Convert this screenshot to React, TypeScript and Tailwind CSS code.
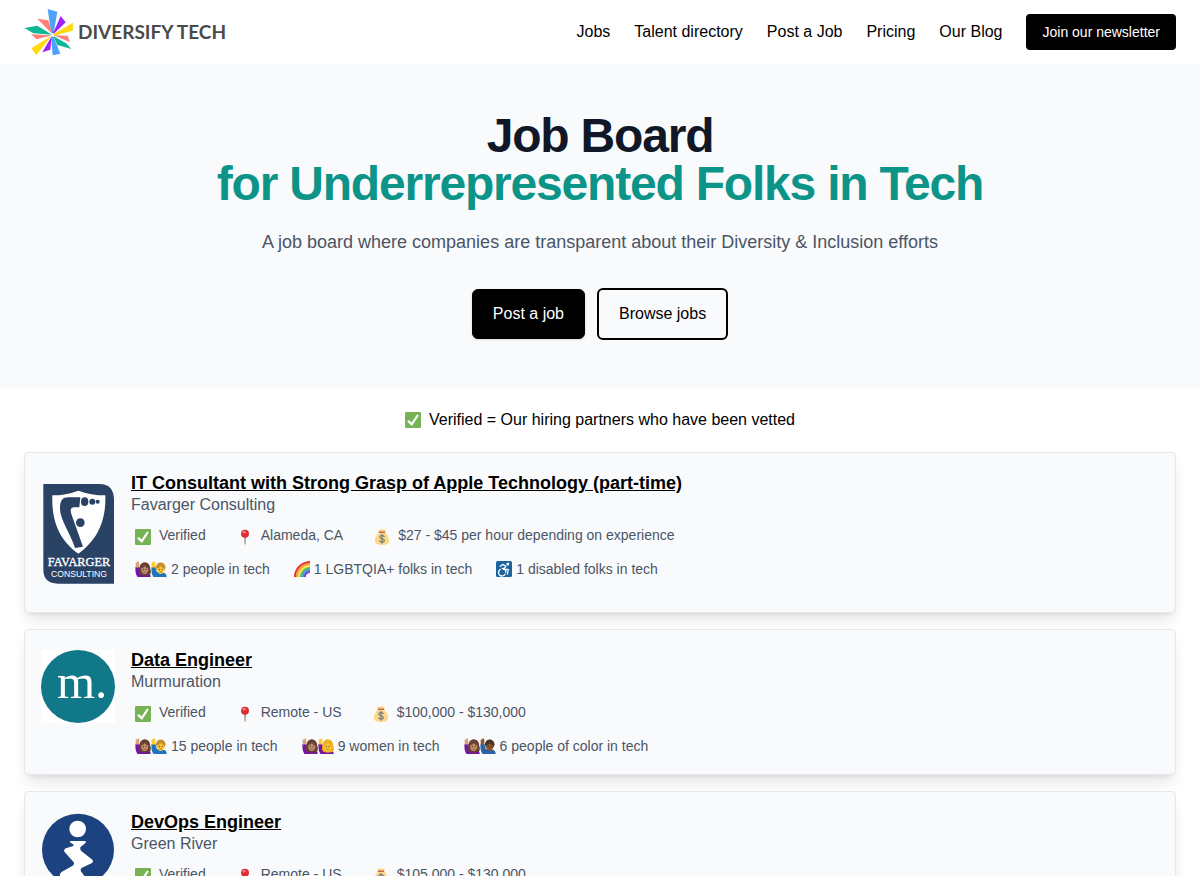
import type { ReactNode } from "react";

const CheckIcon = () => (
    <svg viewBox="0 0 36 36" className="size-4 shrink-0" aria-hidden="true">
        <rect width="36" height="36" rx="3" fill="#77B255" />
        <path
            d="M29.28 6.36a2.5 2.5 0 0 0-3.46.74L14.94 23.88l-5.03-4.65a2.5 2.5 0 1 0-3.39 3.67l7.21 6.67c.48.44 1.09.66 1.7.66.7 0 1.5-.3 2.08-1.18.33-.51 12.51-19.23 12.51-19.23a2.5 2.5 0 0 0-.74-3.46z"
            fill="#fff"
        />
    </svg>
);

const PinIcon = () => (
    <svg viewBox="0 0 16 16" className="size-4 shrink-0" aria-hidden="true">
        <path d="M7.3 7h1.5l-.3 8-.4 1-.4-1z" fill="#8e7368" />
        <circle cx="8" cy="4.8" r="4" fill="#dd2e35" />
        <ellipse cx="7.2" cy="3.2" rx="1.7" ry="1.2" fill="#f47b7e" />
    </svg>
);

const MoneyIcon = () => (
    <svg viewBox="0 0 36 36" className="size-4 shrink-0" aria-hidden="true">
        <path d="M24 8c3-4.5 3-8-.5-6.5-2 .8-2.5-.8-5.5-.8s-3.500 1.600-5.500.8C9 0 9 3.500 12 8z" fill="#FDD888" />
        <path d="M34 26c0 7-5 10-16 10S2 33 2 26 9 9 12 8h12c3 1 10 11 10 18z" fill="#FDD888" />
        <rect x="10.5" y="5.5" width="15" height="3.5" rx="1.7" fill="#BF6952" />
        <path
            d="M23 17.200c-1-1.700-2.900-2.500-5-2.500-2.800 0-4.900 1.400-4.900 3.600 0 5 10 2.400 10 7.300 0 2.300-2.200 3.900-5.100 3.900-2.400 0-4.400-1-5.300-2.900M18 12v20"
            fill="none"
            stroke="#67757F"
            strokeWidth="2.4"
            strokeLinecap="round"
        />
    </svg>
);

const RainbowIcon = () => (
    <svg viewBox="0 0 16 16" className="size-4 shrink-0" fill="none" strokeWidth="2" aria-hidden="true">
        <path d="M1 16C1 8 7 1.5 16 1" stroke="#e5322d" />
        <path d="M3 16C3 9 8.500 3.300 16 3" stroke="#f99c2c" />
        <path d="M5 16C5 10.500 9.500 5.200 16 5" stroke="#f7e24a" />
        <path d="M7 16C7 12 10.500 7.200 16 7" stroke="#4cb95b" />
        <path d="M9 16c0-3 2.500-6.800 7-7" stroke="#3b8ef0" />
        <path d="M10.800 16c0-2 1.700-5 5.200-5.200" stroke="#7a3fd0" />
    </svg>
);

const AccessIcon = () => (
    <svg viewBox="0 0 16 16" className="size-4 shrink-0" aria-hidden="true">
        <rect width="16" height="16" rx="1.5" fill="#1b659f" />
        <circle cx="11.8" cy="3" r="1.5" fill="#fff" />
        <g fill="none" stroke="#fff" strokeWidth="1.3" strokeLinecap="round" strokeLinejoin="round">
            <path d="M4.200 5.300 6.800 3.400l3.200 1.800-2.700 3.200h4.900l-.8 4.800" />
            <path d="M4.200 8.500a3.500 3.500 0 1 0 4.800 4.800" />
            <path d="M6.200 7.400a3.500 3.500 0 0 1 3.600 4" />
        </g>
    </svg>
);

interface PersonProps {
    skin: string;
    hair: string;
    shirt: string;
    hand?: string;
    long?: boolean;
}

const Person = ({ skin, hair, shirt, hand = skin, long }: PersonProps) => (
    <svg viewBox="0 0 16 16" className="size-4 shrink-0" aria-hidden="true">
        <path d="M.5 6 4.200 5.500l1.600 5.500 7.700 1c1.500.7 2.200 2 2.200 4H2.500C.7 13.500.1 9.500.5 6z" fill={shirt} />
        <path d="M.8 6.500.6 2.500 1.500.8 2 2 2.700.3 4 .8 4.500 3 3.900 6.500z" fill={hand} />
        {long && (
            <path
                d="M4 10.500C4.600 5 5.500 1.500 9.700 1.500s5.300 3 5.600 6.500c.8 2.500.8 4-.3 5.500-2 1.500-8 1.500-9.800 0-1-.8-1.400-1.800-1.200-3z"
                fill={hair}
            />
        )}
        <circle cx="9.7" cy="6.3" r="4.8" fill={hair} />
        <path d="M6.200 7.500C8 7 9 6.300 10 5c.8 1.500 1.800 2.200 3.300 2.500.2 3-1.300 5.500-3.600 5.500s-3.700-2.500-3.500-5.500z" fill={skin} />
        <circle cx="8.3" cy="8.3" r=".6" fill="#3b2417" />
        <circle cx="11.1" cy="8.3" r=".6" fill="#3b2417" />
        <path d="M8.500 10.700q1.200 1 2.400 0" fill="none" stroke="#8a3d2c" strokeWidth=".7" />
    </svg>
);

const Woman = () => <Person skin="#c09070" hand="#dda27c" hair="#6b4034" shirt="#7417a0" long />;

const PeopleIcon = () => (
    <span className="flex">
        <Woman />
        <Person skin="#fcc836" hair="#c98f2c" shirt="#1e73be" />
    </span>
);

const WomenIcon = () => (
    <span className="flex">
        <Woman />
        <Person skin="#fcc836" hair="#eeb21f" shirt="#7417a0" long />
    </span>
);

const ColorIcon = () => (
    <span className="flex">
        <Woman />
        <Person skin="#8d5831" hair="#4a3226" shirt="#2b62a8" />
    </span>
);

const BrandLogo = () => (
    <a href="#" className="flex items-center gap-1 text-[#4a4a4a]">
        <svg viewBox="24 24 150 144" className="h-12 w-[50px]" aria-hidden="true">
            <path d="M95 27 124 35 113 100 105 98z" fill="#4da3fb" />
            <path d="M134 48 149 67 112 103 112 98z" fill="#a020f7" />
            <path d="M171 68 170 92 113 107 113 102z" fill="#ffd90f" />
            <path d="M113 106 155 107 162 127z" fill="#fb8278" />
            <path d="M112 108 150 130 166 147 124 135z" fill="#0cb796" />
            <path d="M105 110 113 110 133 161 110 166z" fill="#4da3fb" />
            <path d="M107 109 103 149 79 157z" fill="#a020f7" />
            <path d="M107 107 61 165 46 145z" fill="#ffd90f" />
            <path d="M107 106 62 118 45 103z" fill="#fb8278" />
            <path d="M25 84 64 77 108 104 52 100z" fill="#0cb796" />
            <path d="M64 56 97 61 109 102z" fill="#fb8278" />
        </svg>
        <span className="text-[19px] font-bold whitespace-nowrap font-[Lato,sans-serif]">DIVERSIFY TECH</span>
    </a>
);

const FavargerLogo = () => (
    <svg viewBox="15 -15 222 363" className="w-full" role="img" aria-label="Favarger Consulting logo">
        <path d="M22 18H190Q234 18 234 66V317H66Q22 317 22 274z" fill="#2a4365" />
        <path d="M127 38Q90 52 49 52C47 110 58 178 127 227 196 178 210 110 208 52Q165 52 127 38z" fill="#fff" />
        <path
            d="M72 92C72 66 80 58 97 58H133L130 88H112C103 90 103 98 106 108L141 206 117 210C104 168 72 124 72 92z"
            fill="#2a4365"
        />
        <circle cx="133" cy="134" r="13" fill="#2a4365" />
        <ellipse cx="146" cy="71" rx="11" ry="13" fill="#2a4365" />
        <circle cx="169" cy="71" r="9" fill="#2a4365" />
        <circle cx="185" cy="71" r="6" fill="#2a4365" />
        <text
            x="129"
            y="265"
            textAnchor="middle"
            fontSize="37"
            fill="#fff"
            stroke="#fff"
            className="font-['Liberation_Serif',serif]"
        >
            FAVARGER
        </text>
        <text x="129" y="296" textAnchor="middle" fontSize="26" fill="#fff" className="font-['Liberation_Sans',sans-serif]">
            CONSULTING
        </text>
    </svg>
);

const MurmurationLogo = () => (
    <svg viewBox="0 0 74 73" className="w-full" role="img" aria-label="Murmuration logo">
        <rect width="74" height="73" fill="#fff" />
        <ellipse cx="37" cy="36.5" rx="37" ry="36.5" fill="#107889" />
        <text x="16" y="48" fontSize="49" fill="#fff" className="font-['Liberation_Serif',serif]">
            m.
        </text>
    </svg>
);

const GreenRiverLogo = () => (
    <svg viewBox="63 81 222 222" className="w-full" role="img" aria-label="Green River logo">
        <circle cx="174" cy="194" r="108" fill="#1c427f" />
        <circle cx="173" cy="132" r="25" fill="#fff" />
        <path
            d="M150 168H197V173L181 187Q179 193 184 198L217 224Q222 229 216 234L186 248Q178 254 185 262L210 296H140L120 274Q118 265 126 260L158 242Q165 236 160 230L133 200Q130 194 137 190L158 184Q164 180 158 177L150 172z"
            fill="#fff"
        />
    </svg>
);

interface JobInterface {
    title: string;
    company: string;
    logo: ReactNode;
    location: string;
    salary: string;
    stats: { icon: ReactNode; text: string }[];
}

const navItems = ["Jobs", "Talent directory", "Post a Job", "Pricing", "Our Blog"];

const jobs: JobInterface[] = [
    {
        title: "IT Consultant with Strong Grasp of Apple Technology (part-time)",
        company: "Favarger Consulting",
        logo: <FavargerLogo />,
        location: "Alameda, CA",
        salary: "$27 - $45 per hour depending on experience",
        stats: [
            { icon: <PeopleIcon />, text: "2 people in tech" },
            { icon: <RainbowIcon />, text: "1 LGBTQIA+ folks in tech" },
            { icon: <AccessIcon />, text: "1 disabled folks in tech" },
        ],
    },
    {
        title: "Data Engineer",
        company: "Murmuration",
        logo: <MurmurationLogo />,
        location: "Remote - US",
        salary: "$100,000 - $130,000",
        stats: [
            { icon: <PeopleIcon />, text: "15 people in tech" },
            { icon: <WomenIcon />, text: "9 women in tech" },
            { icon: <ColorIcon />, text: "6 people of color in tech" },
        ],
    },
    {
        title: "DevOps Engineer",
        company: "Green River",
        logo: <GreenRiverLogo />,
        location: "Remote - US",
        salary: "$105,000 - $130,000",
        stats: [],
    },
];

const JobCard = ({ job }: { job: JobInterface }) => (
    <li className="flex items-start gap-4 rounded-sm border border-gray-200 bg-[#f9fafc] px-4 pt-5 pb-[18px] shadow-lg">
        <div className="w-[74px] shrink-0">{job.logo}</div>
        <div className="text-gray-600">
            <h2 className="text-lg leading-5 font-bold text-black">
                <a href="#" className="underline">{job.title}</a>
            </h2>
            <p>{job.company}</p>
            <ul className="mt-2 flex flex-wrap gap-x-[31px] pl-1 text-sm">
                <li className="flex items-end gap-2"><CheckIcon />Verified</li>
                <li className="flex items-end gap-2"><PinIcon />{job.location}</li>
                <li className="flex items-end gap-2"><MoneyIcon />{job.salary}</li>
            </ul>
            {job.stats.length > 0 && (
                <ul className="mt-3.5 flex flex-wrap gap-x-6 pl-1 text-sm">
                    {job.stats.map((stat) => (
                        <li key={stat.text} className="flex items-center gap-1">
                            {stat.icon}
                            {stat.text}
                        </li>
                    ))}
                </ul>
            )}
        </div>
    </li>
);

export default function App() {
    return (
        <div className="bg-white text-black font-['Liberation_Sans',Arial,sans-serif]">
            {/* Header */}
            <header className="flex h-16 items-center justify-between px-6">
                <BrandLogo />
                <nav className="flex items-center gap-6">
                    {navItems.map((item) => (
                        <a key={item} href="#">{item}</a>
                    ))}
                    <button type="button" className="rounded-sm bg-black px-4 py-2 text-sm text-white">
                        Join our newsletter
                    </button>
                </nav>
            </header>

            <main>
                {/* Hero */}
                <section className="bg-[#f9fafc] px-6 py-12 text-center">
                    <h1 className="text-5xl leading-none font-bold tracking-tight text-gray-900">
                        Job Board
                        <span className="block text-[#0d9488]">for Underrepresented Folks in Tech</span>
                    </h1>
                    <p className="mt-5 text-lg leading-7 text-gray-600">
                        A job board where companies are transparent about their Diversity &amp; Inclusion efforts
                    </p>
                    <div className="mt-8 flex items-center justify-center gap-3">
                        <button type="button" className="rounded-md border border-black bg-black px-5 py-3 text-white shadow-sm">
                            Post a job
                        </button>
                        <button type="button" className="rounded-md border-2 border-black px-5 py-3">
                            Browse jobs
                        </button>
                    </div>
                </section>

                {/* Job list */}
                <section className="px-6 py-5">
                    <p className="flex items-center justify-center gap-2">
                        <CheckIcon />
                        Verified = Our hiring partners who have been vetted
                    </p>
                    <ul className="mt-5 flex flex-col gap-4">
                        {jobs.map((job) => (
                            <JobCard key={job.title} job={job} />
                        ))}
                    </ul>
                </section>
            </main>
        </div>
    );
}
